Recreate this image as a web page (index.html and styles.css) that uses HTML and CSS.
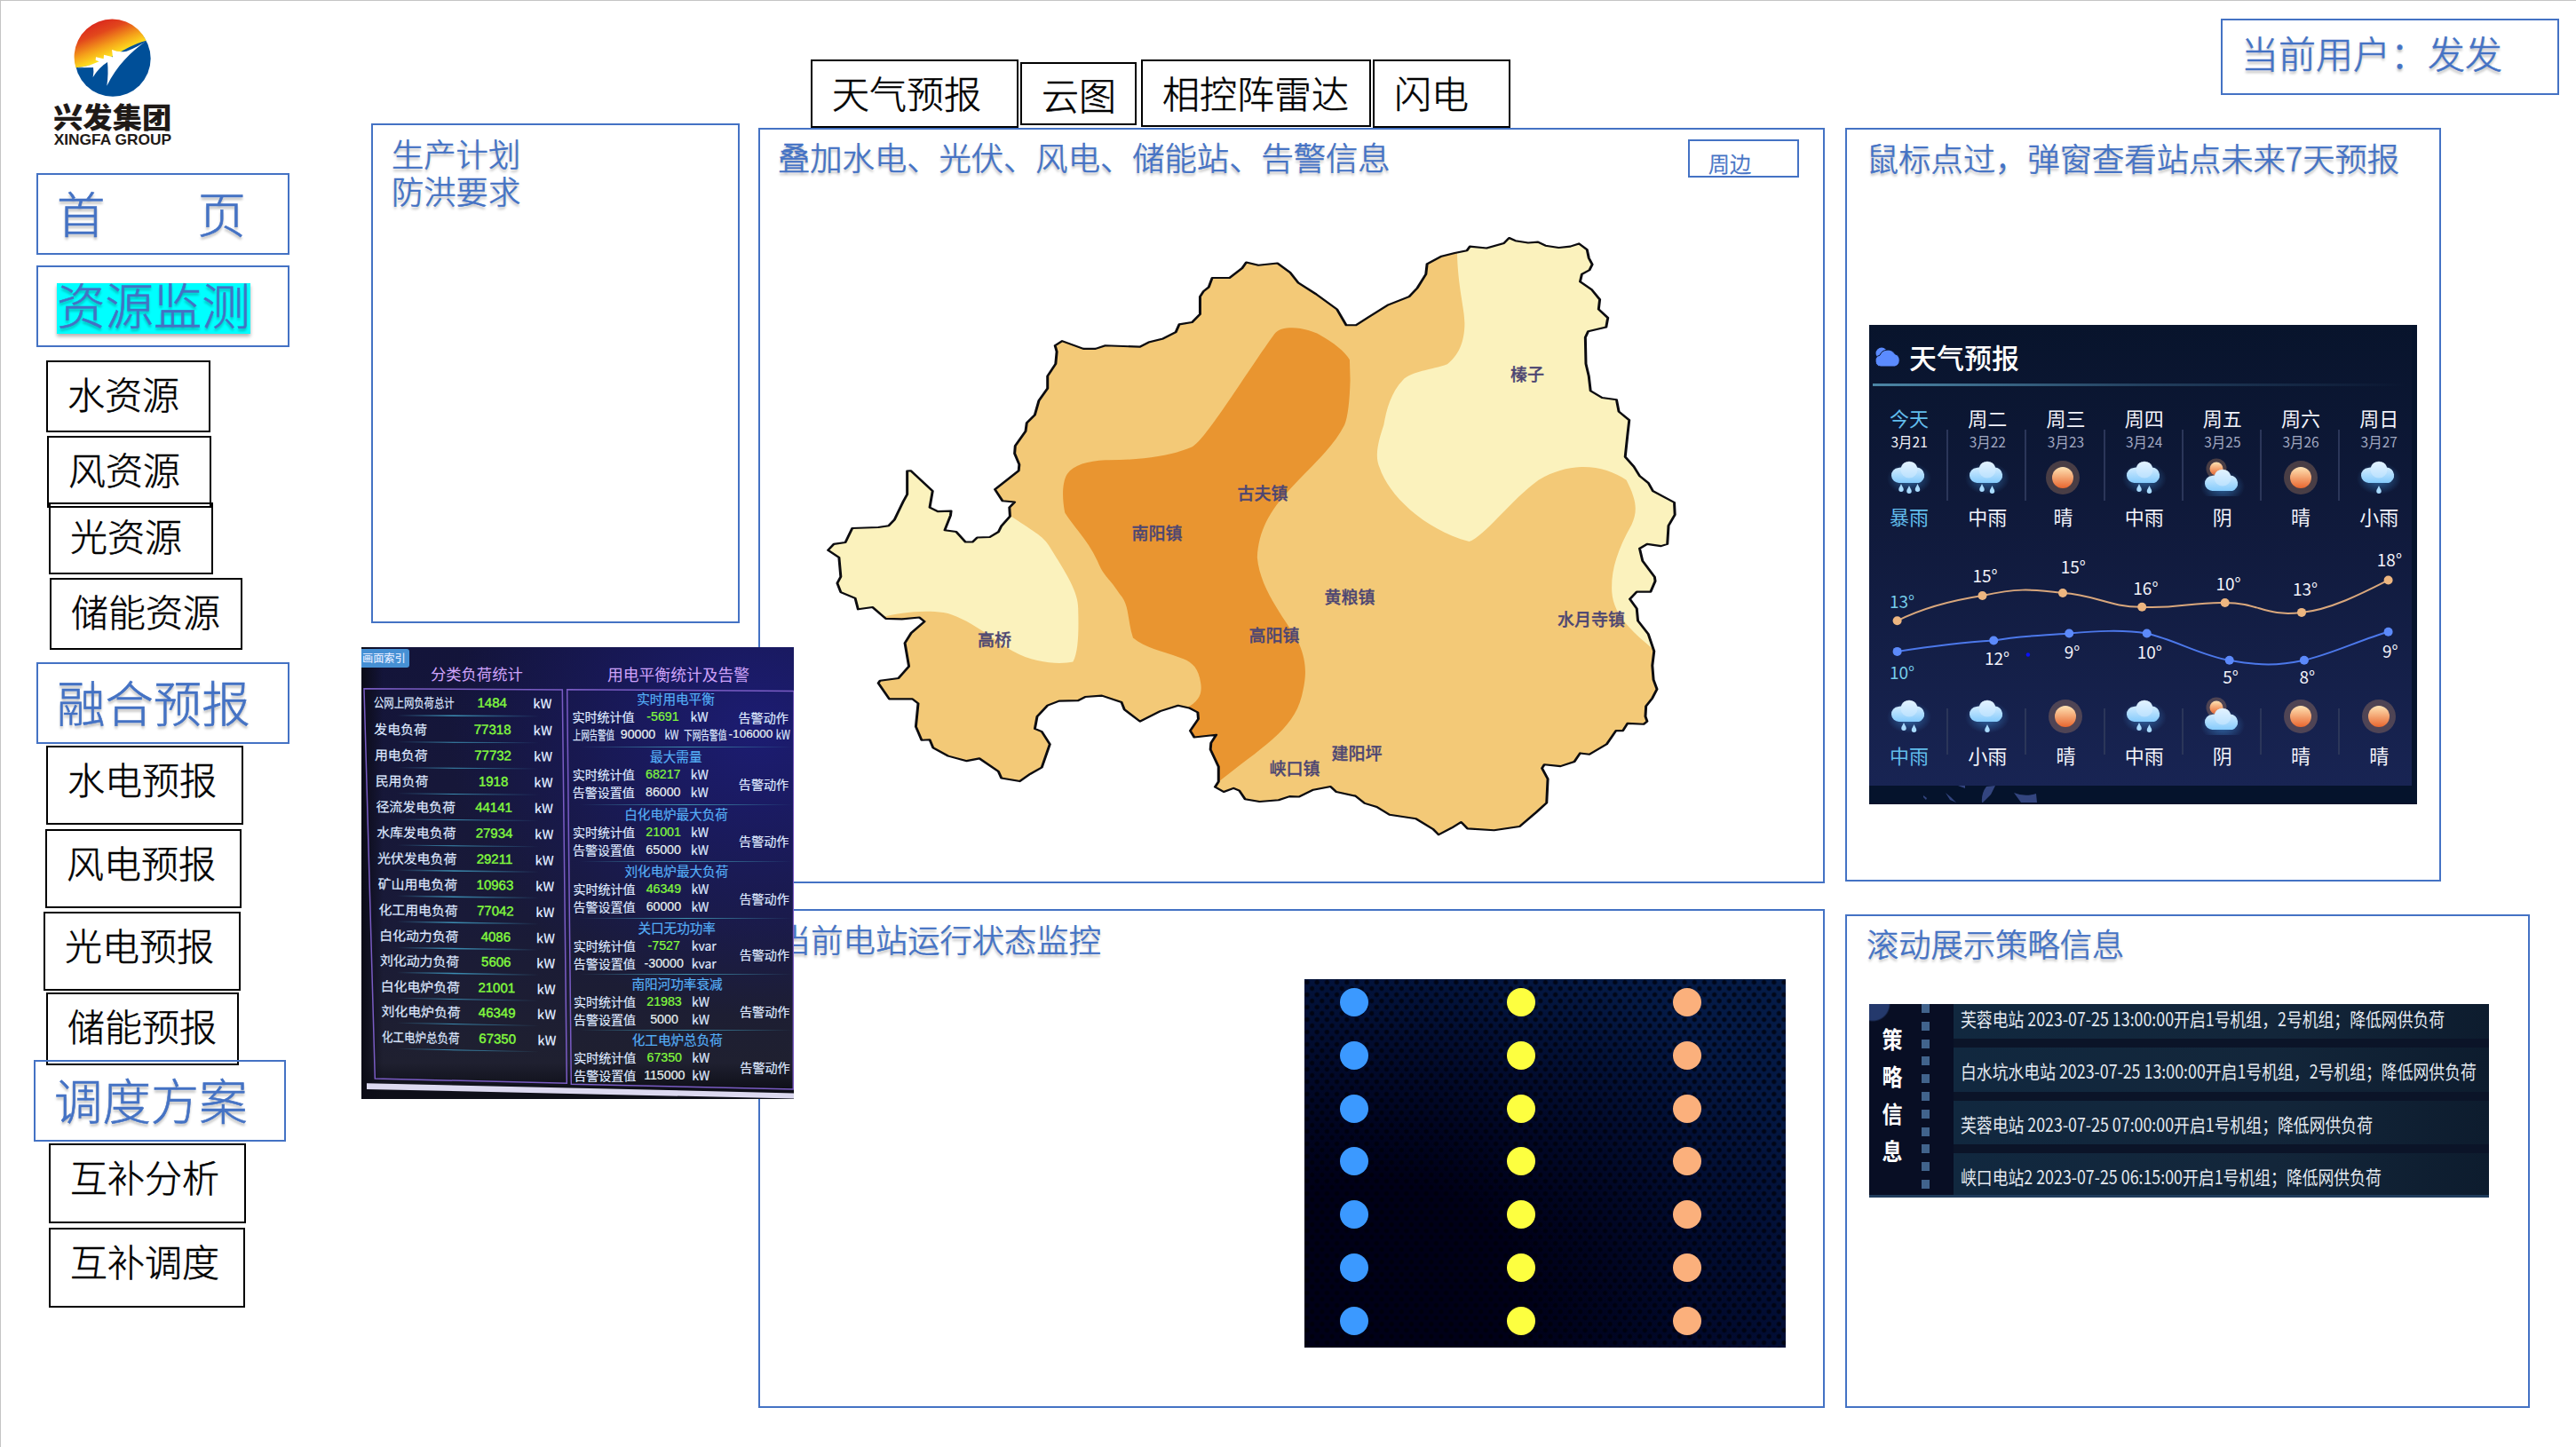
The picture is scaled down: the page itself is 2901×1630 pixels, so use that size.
FILE: index.html
```html
<!DOCTYPE html>
<html lang="zh-CN">
<head>
<meta charset="utf-8">
<title>兴发集团 资源监测</title>
<link rel="stylesheet" href="styles.css">
</head>
<body>
<svg class="defs" width="0" height="0" aria-hidden="true">
  <defs>
    <linearGradient id="gCloud" x1="0" y1="0" x2="0" y2="1"><stop offset="0" stop-color="#eef7ff"/><stop offset="1" stop-color="#85cbfc"/></linearGradient>
    <linearGradient id="gSun" x1="0" y1="0" x2="0" y2="1"><stop offset="0" stop-color="#ffe3b4"/><stop offset="1" stop-color="#e8662f"/></linearGradient>
    <radialGradient id="gGlow"><stop offset="0" stop-color="#4ba6f5" stop-opacity=".55"/><stop offset="1" stop-color="#4ba6f5" stop-opacity="0"/></radialGradient>
  </defs>
  <symbol id="cloud" viewBox="0 0 50 44">
    <ellipse cx="25" cy="24" rx="25" ry="18" fill="url(#gGlow)"/>
    <path d="M14 29a8.500 8.500 0 0 1-1-17a5 5 0 0 1 3-.5a9.500 9.500 0 0 1 18 0a9 9 0 0 1 2 17.500z" fill="url(#gCloud)"/>
    <circle cx="25" cy="14" r="9.500" fill="#d8edff" opacity=".5"/>
  </symbol>
  <symbol id="drop" viewBox="0 0 8 12"><path d="M4 1C5 4 7 5.500 7 8a3 3 0 0 1-6 0C1 5.500 3 4 4 1z" fill="#a9dbff"/></symbol>
  <symbol id="rain3" viewBox="0 0 50 44"><use href="#cloud" width="50" height="44"/><use href="#drop" x="12" y="29" width="8" height="11"/><use href="#drop" x="21" y="31" width="8" height="11"/><use href="#drop" x="30.500" y="29" width="8" height="11"/></symbol>
  <symbol id="rain2" viewBox="0 0 50 44"><use href="#cloud" width="50" height="44"/><use href="#drop" x="15" y="29" width="8" height="11"/><use href="#drop" x="26.500" y="31" width="8" height="11"/></symbol>
  <symbol id="rain1" viewBox="0 0 50 44"><use href="#cloud" width="50" height="44"/><use href="#drop" x="21" y="31" width="8" height="11"/></symbol>
  <symbol id="sun" viewBox="0 0 50 44"><circle cx="25" cy="23" r="19" fill="#e9a36b" opacity=".27"/><circle cx="25" cy="23" r="12" fill="url(#gSun)"/></symbol>
  <symbol id="overcast" viewBox="0 0 50 44"><circle cx="18" cy="13" r="11.500" fill="#e9a36b" opacity=".27"/><circle cx="18" cy="13" r="7.500" fill="url(#gSun)"/><use href="#cloud" y="9" width="50" height="44"/></symbol>
</svg>

<div class="page">
  <aside class="sidebar">
    <svg class="logo" viewBox="0 0 465 465" role="img" aria-label="兴发集团">
      <defs>
        <linearGradient id="gLogo" x1=".15" y1=".1" x2=".55" y2=".75"><stop offset="0" stop-color="#d9231d"/><stop offset=".35" stop-color="#e2471c"/><stop offset=".7" stop-color="#f5a11a"/><stop offset="1" stop-color="#ffe51f"/></linearGradient>
      </defs>
      <g transform="translate(0 2)">
        <circle cx="231" cy="151" r="128" fill="#004f98"/>
        <path d="M106 182A128 128 0 0 1 344 90C260 112 220 170 106 182z" fill="url(#gLogo)"/>
        <path d="M107 182C135 181 160 172 185 161L173 156L174 146L200 152L201 138L231 146L228 121Q252 131 278 126Q316 112 344 91C290 130 245 175 211 243Q217 200 213 163Q185 180 164 214Q168 196 165 181z" fill="#fff"/>
      </g>
      <text class="logo-cn" x="30" y="386" textLength="400" lengthAdjust="spacingAndGlyphs">兴发集团</text>
      <text class="logo-en" x="32" y="444" textLength="397" lengthAdjust="spacingAndGlyphs">XINGFA GROUP</text>
    </svg>
    <nav class="nav">
      <a class="box main n-home"><span>首</span><span>页</span></a>
      <a class="box main n-monitor"><mark>资源监测</mark></a>
      <a class="box sub n-water">水资源</a>
      <a class="box sub n-wind">风资源</a>
      <a class="box sub n-light">光资源</a>
      <a class="box sub n-store">储能资源</a>
      <a class="box main n-fusion">融合预报</a>
      <a class="box sub n-hydro">水电预报</a>
      <a class="box sub n-windf">风电预报</a>
      <a class="box sub n-pv">光电预报</a>
      <a class="box sub n-storef">储能预报</a>
      <a class="box main n-plan">调度方案</a>
      <a class="box sub n-analysis">互补分析</a>
      <a class="box sub n-dispatch">互补调度</a>
    </nav>
  </aside>

  <section class="plan panel"><h2>生产计划<br>防洪要求</h2></section>

  <main class="center">
    <div class="tabs">
      <a class="box sub t-weather">天气预报</a>
      <a class="box sub t-cloud">云图</a>
      <a class="box sub t-radar">相控阵雷达</a>
      <a class="box sub t-flash">闪电</a>
    </div>
    <section class="panel map-panel">
      <header><h2>叠加水电、光伏、风电、储能站、告警信息</h2><a class="near">周边</a></header>
      <svg class="map" viewBox="0 0 1020 720">
        <defs>
          <path id="county" d="M50 827L60 812L80 808L92 773L137 771L155 767L165 752L180 708L187 690L187 633L193 632L231 682L226 722L240 732L263 731L262 742L252 778L272 782L288 807L300 807L308 796L330 795L345 782L350 768L365 744L364 722L373 709L352 706L339 678L380 632L381 617L373 590L374 571L392 535L394 515L408 495L415 460L430 430L430 400L444 370L446 340L443 325L455 314L492 333L513 333L530 325L590 328L605 317L630 308L652 292L658 273L680 268L694 248L694 205L700 192L709 182L715 159L745 159L767 135L774 121L795 128L828 123L850 146L864 171L895 199L931 236L947 275L964 275L985 256L1020 225L1056 205L1070 184L1085 150L1087 125L1112 106L1135 98L1156 92L1161 82L1190 86L1220 74L1229 61L1240 68L1262 73L1279 71L1292 80L1315 85L1335 82L1350 75L1364 90L1367 110L1373 126L1368 140L1355 150L1352 168L1372 188L1386 212L1384 236L1400 257L1397 280L1366 290L1361 305L1362 370L1367 400L1370 436L1390 453L1415 458L1419 487L1437 508L1434 545L1430 598L1445 622L1455 645L1470 662L1478 682L1515 710L1516 740L1505 767L1503 812L1492 817L1468 812L1455 823L1460 853L1481 893L1482 903L1474 929L1450 929L1438 947L1450 970L1452 1000L1470 1033L1480 1075L1477 1110L1479 1145L1485 1168L1477 1190L1466 1210L1465 1235L1468 1247L1462 1254L1434 1252L1426 1270L1414 1270L1398 1303L1368 1328L1352 1325L1342 1346L1318 1357L1290 1353L1286 1362L1296 1388L1294 1447L1276 1470L1247 1505L1203 1514L1157 1510L1146 1494L1130 1508L1107 1525L1098 1512L1068 1486L1022 1476L1000 1457L979 1448L963 1430L930 1420L920 1407L890 1415L865 1432L849 1431L830 1440L797 1444L772 1438L762 1417L752 1411L735 1420L720 1408L726 1395L726 1358L712 1316L713 1300L722 1280L684 1286L677 1270L691 1241L690 1225L675 1214L656 1208L625 1222L590 1247L563 1218L558 1200L524 1184L495 1187L483 1196L450 1197L430 1208L412 1235L408 1265L420 1272L434 1303L420 1360L400 1376L382 1394L350 1386L345 1370L312 1338L290 1344L258 1332L232 1312L226 1292L212 1293L202 1260L206 1203L196 1192L156 1192L137 1153L140 1147L172 1141L190 1112L183 1055L194 1030L217 1002L208 992L178 996L150 995L127 967L102 972L97 945L72 930L66 908L72 892L69 845z"/>
          <clipPath id="inside"><use href="#county"/></clipPath>
        </defs>
        <g transform="scale(.65051 .45918)">
          <g clip-path="url(#inside)">
            <rect width="1568" height="1568" fill="#f3c977"/>
            <path fill="#fbf2bd" d="M1139 0L1139 95C1140 180 1152 235 1152 270C1152 320 1140 350 1122 371C1095 385 1060 388 1045 410C1025 440 1017 480 1012 520C1000 570 997 600 1005 625C1020 690 1080 775 1160 806C1185 795 1235 700 1280 655C1340 605 1395 620 1432 655C1450 705 1452 730 1441 765C1415 830 1405 880 1407 930C1410 990 1445 1030 1485 1078L1568 1078L1568 0z"/>
            <path fill="#fbf2bd" d="M0 600L200 560L330 700L367 744C400 775 425 795 432 815C465 890 483 930 483 970C484 1020 484 1075 474 1101C455 1107 410 1107 370 1075C340 1050 290 990 250 980C210 972 170 982 140 992L0 1000z"/>
            <path fill="#e99530" d="M835 285C860 275 890 290 900 298C925 318 945 340 953 360L954 410C953 460 950 500 944 520C925 575 880 630 848 680C815 730 795 780 793 845C798 930 850 1010 865 1055C880 1105 878 1140 870 1185C855 1270 800 1310 722 1400L600 1300L670 1215C695 1195 699 1175 694 1145C690 1110 675 1098 660 1091C625 1072 600 1068 578 1042C568 1000 572 960 555 935C540 900 530 895 520 865C500 800 480 780 460 735C455 700 455 660 464 640C475 618 500 608 530 606C600 607 650 592 678 575C700 565 770 400 820 302C826 290 832 286 835 285z"/>
          </g>
          <use href="#county" fill="none" stroke="#0c0c10" stroke-width="4.600" stroke-linejoin="round"/>
        </g>
        <g class="towns">
          <text x="820" y="189">榛子</text><text x="522" y="323">古夫镇</text><text x="403" y="368">南阳镇</text>
          <text x="620" y="440">黄粮镇</text><text x="892" y="465">水月寺镇</text><text x="220" y="488">高桥</text>
          <text x="535" y="483">高阳镇</text><text x="628" y="616">建阳坪</text><text x="558" y="633">峡口镇</text>
        </g>
      </svg>
    </section>
    <section class="panel status-panel">
      <h2>当前电站运行状态监控</h2>
      <div class="matrix">
        <i></i><i></i><i></i><i></i><i></i><i></i><i></i>
        <i></i><i></i><i></i><i></i><i></i><i></i><i></i>
        <i></i><i></i><i></i><i></i><i></i><i></i><i></i>
      </div>
    </section>
  </main>

  <div class="right">
    <div class="user">当前用户：发发</div>
    <section class="panel forecast-panel">
      <h2>鼠标点过，弹窗查看站点未来7天预报</h2>
      <div class="weather">
        <div class="weather-in">
          <header>
            <svg viewBox="0 0 30 22"><circle cx="8" cy="7" r="6.500" fill="#5b8bff"/><path d="M7 22a6.500 6.500 0 0 1-1-12.800a9.500 9.500 0 0 1 17-1.500a7.500 7.500 0 0 1 0 14.300z" fill="#5b8bff" stroke="#0c1530" stroke-width="1"/></svg>
            <h3>天气预报</h3>
          </header>
          <ol class="days">
            <li class="today"><b>今天</b><time>3月21</time><svg><use href="#rain3"/></svg><em>暴雨</em></li>
            <li><b>周二</b><time>3月22</time><svg><use href="#rain2"/></svg><em>中雨</em></li>
            <li><b>周三</b><time>3月23</time><svg class="nudge"><use href="#sun"/></svg><em class="nudge">晴</em></li>
            <li><b>周四</b><time>3月24</time><svg><use href="#rain2"/></svg><em>中雨</em></li>
            <li><b>周五</b><time>3月25</time><svg><use href="#overcast"/></svg><em>阴</em></li>
            <li><b>周六</b><time>3月26</time><svg><use href="#sun"/></svg><em>晴</em></li>
            <li><b>周日</b><time>3月27</time><svg><use href="#rain1"/></svg><em>小雨</em></li>
          </ol>
          <svg class="chart" viewBox="0 240 611 170">
            <path class="hi" d="M31.600 333.300C60 319 95 310 127.500 305C165 297 180 297 218 302C255 304 270 318 307.200 317.700C345 320 365 312 400.700 313C440 313 445 329 487 323.900C520 321 560 300 584.600 287.500"/>
            <path class="lo" d="M31.600 367.900C70 362 100 358 140.200 355.500C170 350 195 350 225.200 347.500C255 345 285 343 312.700 347.500C345 355 375 373 405.700 377.700C440 384 460 384 489.900 377.700C520 371 555 354 584.600 345.700"/>
            <g class="hi-dots"><circle cx="31.600" cy="333.300" r="5"/><circle cx="127.500" cy="305" r="5"/><circle cx="218" cy="302" r="5"/><circle cx="307.200" cy="317.700" r="5"/><circle cx="400.700" cy="313" r="5"/><circle cx="487" cy="323.900" r="5"/><circle cx="584.600" cy="287.500" r="5"/></g>
            <g class="lo-dots"><circle cx="31.600" cy="367.900" r="5"/><circle cx="140.200" cy="355.500" r="5"/><circle cx="225.200" cy="347.500" r="5"/><circle cx="312.700" cy="347.500" r="5"/><circle cx="405.700" cy="377.700" r="5"/><circle cx="489.900" cy="377.700" r="5"/><circle cx="584.600" cy="345.700" r="5"/></g>
            <circle cx="178.900" cy="371.500" r="2.200" fill="#0a10ff"/>
            <text class="now" x="37" y="318.600">13°</text><text x="130.500" y="290">15°</text><text x="229.800" y="279.700">15°</text><text x="311.400" y="304">16°</text><text x="404.500" y="299.300">10°</text><text x="491" y="305">13°</text><text x="585.900" y="272">18°</text>
            <text class="now" x="37" y="398.600">10°</text><text x="144" y="383">12°</text><text x="228.500" y="376">9°</text><text x="315.700" y="376">10°</text><text x="407" y="404.400">5°</text><text x="493.300" y="404">8°</text><text x="586.700" y="374.600">9°</text>
          </svg>
          <ol class="days night">
            <li class="today"><svg><use href="#rain2"/></svg><em>中雨</em></li>
            <li><svg><use href="#rain1"/></svg><em>小雨</em></li>
            <li><svg><use href="#sun"/></svg><em>晴</em></li>
            <li><svg><use href="#rain2"/></svg><em>中雨</em></li>
            <li><svg><use href="#overcast"/></svg><em>阴</em></li>
            <li><svg><use href="#sun"/></svg><em>晴</em></li>
            <li><svg><use href="#sun"/></svg><em>晴</em></li>
          </ol>
        </div>
        <svg class="islands" viewBox="0 0 200 20"><path d="M61 11l4 3-1 2-3-3zM86 8l6 5 6 6-7-3zM100 0h8v3zM132 1l10-1-5 10-9 9h-1q-1-10 5-18zM163 8q12 5 25 1l1 10h-18z" fill="#33457f"/></svg>
      </div>
    </section>
    <section class="panel strategy-panel">
      <h2>滚动展示策略信息</h2>
      <div class="strategy">
        <h3><span>策</span><span>略</span><span>信</span><span>息</span></h3>
        <div class="ticks"></div>
        <ul>
          <li><span>芙蓉电站 2023-07-25 13:00:00开启1号机组，2号机组；降低网供负荷</span></li>
          <li><span>白水坑水电站 2023-07-25 13:00:00开启1号机组，2号机组；降低网供负荷</span></li>
          <li><span>芙蓉电站 2023-07-25 07:00:00开启1号机组；降低网供负荷</span></li>
          <li><span>峡口电站2 2023-07-25 06:15:00开启1号机组；降低网供负荷</span></li>
        </ul>
      </div>
    </section>
  </div>

  <section class="loads">
    <svg class="frames" viewBox="0 0 487 509">
      <path d="M3 46.700L226.300 48L231.300 491.200L15.300 486.100z"/>
      <path d="M231.700 47.700L487 49.400L486.300 498L236.300 492.200z"/>
      <path class="bar" d="M6 491.200L487 502.400V508.500L6 498z"/>
    </svg>
    <div class="load-left">
      <a class="index">画面索引</a>
      <h3>分类负荷统计</h3>
      <ul>
        <li style="--i:0"><span class="tight">公网上网负荷总计</span><b>1484</b><i>kW</i></li>
        <li style="--i:1"><span>发电负荷</span><b>77318</b><i>kW</i></li>
        <li style="--i:2"><span>用电负荷</span><b>77732</b><i>kW</i></li>
        <li style="--i:3"><span>民用负荷</span><b>1918</b><i>kW</i></li>
        <li style="--i:4"><span>径流发电负荷</span><b>44141</b><i>kW</i></li>
        <li style="--i:5"><span>水库发电负荷</span><b>27934</b><i>kW</i></li>
        <li style="--i:6"><span>光伏发电负荷</span><b>29211</b><i>kW</i></li>
        <li style="--i:7"><span>矿山用电负荷</span><b>10963</b><i>kW</i></li>
        <li style="--i:8"><span>化工用电负荷</span><b>77042</b><i>kW</i></li>
        <li style="--i:9"><span>白化动力负荷</span><b>4086</b><i>kW</i></li>
        <li style="--i:10"><span>刘化动力负荷</span><b>5606</b><i>kW</i></li>
        <li style="--i:11"><span>白化电炉负荷</span><b>21001</b><i>kW</i></li>
        <li style="--i:12"><span>刘化电炉负荷</span><b>46349</b><i>kW</i></li>
        <li style="--i:13"><span class="snug">化工电炉总负荷</span><b>67350</b><i>kW</i></li>
      </ul>
    </div>
    <div class="load-right">
      <h3>用电平衡统计及告警</h3>
      <div class="group first" style="--i:0"><h4>实时用电平衡</h4><span>实时统计值</span><b>-5691</b><i>kW</i><em>告警动作</em><p><span>上网告警值</span><b>90000</b><i>kW</i><span>下网告警值</span><b>-106000</b><i>kW</i></p></div>
      <div class="group" style="--i:1"><h4>最大需量</h4><span>实时统计值</span><b>68217</b><i>kW</i><em>告警动作</em><span>告警设置值</span><b class="set">86000</b><i>kW</i></div>
      <div class="group" style="--i:2"><h4>白化电炉最大负荷</h4><span>实时统计值</span><b>21001</b><i>kW</i><em>告警动作</em><span>告警设置值</span><b class="set">65000</b><i>kW</i></div>
      <div class="group" style="--i:3"><h4>刘化电炉最大负荷</h4><span>实时统计值</span><b>46349</b><i>kW</i><em>告警动作</em><span>告警设置值</span><b class="set">60000</b><i>kW</i></div>
      <div class="group" style="--i:4"><h4>关口无功功率</h4><span>实时统计值</span><b>-7527</b><i>kvar</i><em>告警动作</em><span>告警设置值</span><b class="set">-30000</b><i>kvar</i></div>
      <div class="group" style="--i:5"><h4>南阳河功率衰减</h4><span>实时统计值</span><b>21983</b><i>kW</i><em>告警动作</em><span>告警设置值</span><b class="set">5000</b><i>kW</i></div>
      <div class="group last" style="--i:6"><h4>化工电炉总负荷</h4><span>实时统计值</span><b>67350</b><i>kW</i><em>告警动作</em><span>告警设置值</span><b class="set">115000</b><i>kW</i></div>
    </div>
  </section>
</div>
</body>
</html>
```
FILE: styles.css
```css
* { box-sizing: border-box; margin: 0; padding: 0; }
body { background: #fff; font-family: "Noto Sans CJK SC", "Noto Sans", sans-serif; }
ul, ol { list-style: none; }
i, em { font-style: normal; }
svg { display: block; }
.defs { position: absolute; }

.page {
  position: relative;
  display: flex;
  align-items: flex-start;
  width: 2901px;
  height: 1630px;
  overflow: hidden;
  border-top: 1px solid #c4c4c4;
  border-left: 1px solid #c4c4c4;
}

h2, .user, .near, .main {
  color: #4472c4;
  font-weight: 300;
  -webkit-text-stroke: .6px;
  text-shadow: 0 3px 3px rgba(0, 0, 0, .28);
}
h2 { font-size: 36.300px; line-height: 42px; white-space: nowrap; }
.panel, .user, .near { border: 2px solid #4472c4; }

/* sidebar */
.sidebar { width: 417px; flex: none; padding-top: 14px; }
.logo { width: 155px; height: 155px; margin-left: 49px; }
.logo-cn { font: 900 94px "Noto Sans CJK SC", sans-serif; fill: #1f1a17; }
.logo-en { font: 700 49px "Liberation Sans", sans-serif; fill: #1f1a17; }
.nav { padding-top: 25px; }
.box { display: block; white-space: nowrap; }
.main {
  width: 285px;
  height: 92px;
  margin-left: 40px;
  padding-left: 21px;
  border: 2px solid #4472c4;
  font-size: 54.400px;
  line-height: 83px;
}
.main mark {
  display: inline-block;
  height: 57px;
  line-height: 45px;
  background: #0ff;
  color: inherit;
  box-shadow: 0 3px 4px rgba(0, 0, 0, .3);
  vertical-align: top;
  margin-top: 18px;
}
.sub {
  border: 2px solid #000;
  color: #000;
  font-size: 42px;
  font-weight: 300;
  -webkit-text-stroke: .5px;
  line-height: 69px;
  padding-left: 22px;
}
.n-home { display: flex; gap: 104px; }
.n-monitor { margin-top: 12px; }
.n-water { width: 185px; height: 81px; margin: 15px 0 0 51px; }
.n-wind { width: 185px; height: 81px; margin: 4px 0 0 52px; }
.n-light { width: 185px; height: 81px; margin: -6px 0 0 54px; }
.n-store { width: 217px; height: 81px; margin: 4px 0 0 55px; }
.n-fusion { margin-top: 14px; }
.n-hydro { width: 222px; height: 89px; margin: 2px 0 0 51px; }
.n-windf { width: 221px; height: 89px; margin: 5px 0 0 50px; }
.n-pv { width: 222px; height: 89px; margin: 4px 0 0 48px; }
.n-storef { width: 217px; height: 82px; margin: 2px 0 0 51px; }
.n-plan { width: 284px; margin: -6px 0 0 37px; }
.n-analysis { width: 222px; height: 90px; margin: 2px 0 0 54px; }
.n-dispatch { width: 221px; height: 90px; margin: 5px 0 0 54px; }

/* production plan */
.plan { width: 415px; height: 563px; margin-top: 138px; padding: 10px 0 0 21px; flex: none; }

/* centre column */
.center { width: 1201px; margin: 66px 0 0 21px; flex: none; }
.tabs { display: flex; height: 77px; padding-left: 59px; }
.t-weather { width: 234px; height: 77px; }
.t-cloud { width: 131px; height: 71px; margin: 3px 0 0 2px; line-height: 68px; }
.t-radar { width: 259px; height: 76px; margin-left: 5px; }
.t-flash { width: 155px; height: 77px; margin-left: 2px; }
.map-panel { height: 851px; }
.map-panel header { display: flex; justify-content: space-between; height: 94px; padding: 11px 27px 0 20px; }
.map-panel h2 { margin-top: -2px; }
.near { width: 125px; height: 43px; padding-left: 21px; font-size: 24px; line-height: 49px; text-shadow: none; }
.map { width: 1020px; height: 720px; margin-left: 44px; }
.towns text {
  font: 500 19px "Noto Sans CJK SC", sans-serif;
  fill: #4d4672;
  stroke: #4d4672;
  stroke-width: .3;
  text-anchor: middle;
}
.status-panel { height: 562px; margin-top: 29px; padding: 10px 0 0 21px; }
.matrix {
  display: grid;
  grid-template-rows: repeat(7, 32px);
  grid-auto-flow: column;
  grid-auto-columns: 32px;
  gap: 27.800px 155.600px;
  width: 542px;
  height: 415px;
  margin: 25px 0 0 592px;
  padding: 10px 0 0 40px;
  background:
    radial-gradient(circle at 3px 3.500px, rgba(0, 0, 8, .75) 1.800px, transparent 3.400px) 0 0 / 11.200px 14px,
    radial-gradient(circle at 8.600px 10.500px, rgba(0, 0, 8, .75) 1.800px, transparent 3.400px) 0 0 / 11.200px 14px,
    radial-gradient(ellipse at 15% 85%, #000018 25%, rgba(0, 0, 30, 0) 80%),
    linear-gradient(200deg, #051c48, #000a34);
}
.matrix i { border-radius: 50%; background: #3b99ff; }
.matrix i:nth-child(n+8) { background: #fdff40; }
.matrix i:nth-child(n+15) { background: #fbb07c; }

/* right column */
.right { margin: 20px 0 0 23px; flex: none; width: 805px; }
.user { width: 381px; height: 86px; margin-left: 423px; padding-left: 21px; font-size: 42px; line-height: 71px; white-space: nowrap; }
.forecast-panel { width: 671px; height: 849px; margin-top: 37px; padding: 10px 0 0 22px; }
.weather { width: 617px; height: 540px; margin: 168px 0 0 3px; background: #05132c; }
.weather-in { width: 611px; height: 519px; background: linear-gradient(#08142c, #101a3c 45%, #182453); display: flex; flex-direction: column; }
.weather header {
  display: flex;
  align-items: center;
  gap: 9px;
  height: 69px;
  padding: 2px 0 0 6px;
  background: linear-gradient(90deg, #4c86a6, #23405f 50%, transparent) 4px 100% / 600px 3px no-repeat;
}
.weather header svg { width: 30px; height: 22px; }
.weather h3 { color: #fff; font-size: 31px; font-weight: 500; line-height: 44px; }
.days { display: grid; grid-template-columns: repeat(7, 88.200px); width: 617px; height: 171px; padding-top: 20px; margin-left: 1px; }
.days li {
  display: flex;
  flex-direction: column;
  align-items: center;
  color: #f3f3fa;
  background: linear-gradient(#2b3659, #2b3659) 100% 29px / 2px 80px no-repeat;
}
.days li:last-child { background: none; }
.days b { font-size: 22px; font-weight: 400; line-height: 30px; }
.days time { font-size: 15.500px; line-height: 24px; color: #a2a9c2; }
.days svg { width: 50px; height: 44px; margin-top: 6px; overflow: visible; }
.days em { font-size: 22px; line-height: 30px; margin-top: 7px; }
.days .nudge { transform: translateX(-3px); }
.days .today { color: #62bdec; }
.days .today time { color: #f3f3fa; }
.chart { width: 611px; height: 170px; }
.chart path { fill: none; stroke-width: 2; }
.chart .hi { stroke: #d9a77c; }
.chart .lo { stroke: #4c78ea; }
.hi-dots { fill: #edb680; }
.lo-dots { fill: #5c8afb; }
.chart text { font: 400 19px "Noto Sans CJK SC", sans-serif; fill: #f3f3fa; text-anchor: middle; }
.chart .now { fill: #76cdea; }
.night { height: 105px; padding-top: 2px; }
.night li { background-position: 100% 20px; background-size: 2px 52px; }
.islands { width: 200px; height: 20px; }

.strategy-panel { width: 771px; height: 556px; margin-top: 37px; padding: 9px 0 0 22px; }
.strategy {
  display: flex;
  width: 698px;
  height: 218px;
  margin: 48px 0 0 3px;
  overflow: hidden;
  background: radial-gradient(circle at 4px 0, #24396c 18px, transparent 20px), #080e24;
  border-bottom: 3px solid #203c5c;
}
.strategy h3 { flex: none; width: 52px; padding-top: 18px; color: #fff; font-size: 23px; line-height: 42px; text-align: center; }
.strategy h3 span { display: block; transform: scaleY(1.150); }
.ticks { flex: none; width: 9px; margin: 0 27px 0 7px; background: repeating-linear-gradient(#41638c 0 10px, transparent 10px 19.800px); }
.strategy ul { flex: 1; min-width: 0; display: flex; flex-direction: column; gap: 10px; background: #0b1428; margin-top: -10px; }
.strategy li { flex: none; height: 49.400px; padding-left: 8px; background: linear-gradient(90deg, #11283f, #13263a 60%, #0d1c2e); line-height: 52px; }
.strategy li span { display: inline-block; transform: scaleX(.849); transform-origin: 0 0; color: #e3e9f0; font-size: 21px; font-weight: 400; white-space: nowrap; }

/* load statistics, floating over the neighbouring panels */
.loads {
  position: absolute;
  left: 406px;
  top: 728px;
  display: flex;
  width: 487px;
  height: 509px;
  overflow: hidden;
  background:
    linear-gradient(90deg, #0b0b16, transparent 5%),
    radial-gradient(ellipse at 92% 18%, #1c1c72, rgba(26, 26, 80, 0) 55%),
    linear-gradient(#13143a, #191a38 60%, #1f2030 92%, #0e0f18 98%);
  color: #dfe8ff;
}
.frames { position: absolute; inset: 0; width: 487px; height: 509px; }
.frames path { fill: none; stroke: #7a5cc4; stroke-width: 1.500; }
.frames .bar { fill: #dcd9f0; stroke: none; }
.load-left { width: 232px; flex: none; }
.index {
  display: block;
  width: 54px;
  height: 21px;
  margin-top: 2px;
  padding-left: 1px;
  border-radius: 0 3px 3px 0;
  background: #4690d4;
  font-size: 12.200px;
  font-weight: 500;
  line-height: 20px;
}
.loads h3 { color: #cfa3fb; font-size: 17.300px; font-weight: 400; line-height: 20px; white-space: nowrap; }
.load-left h3 { margin: -3px 0 8px 78px; }
.load-left li {
  display: grid;
  grid-template-columns: calc(103.700px - var(--i) * .28px) 60px 30px;
  height: calc(29.500px - var(--i) * .1px);
  padding-left: calc(13.500px + var(--i) * .74px);
  line-height: 28px;
  white-space: nowrap;
  transform: skewY(calc(.3deg + var(--i) * .07deg));
  transform-origin: 0 0;
  background: linear-gradient(90deg, transparent, #3c8fb4 40%, transparent) 40px 100% / 160px 1.500px no-repeat;
}
.load-left li span { font-size: 14.900px; transform-origin: 0 50%; -webkit-text-stroke: .2px; }
.load-left .tight { transform: scaleX(.760); }
.load-left .snug { transform: scaleX(.840); }
.loads b {
  font-family: "Liberation Sans", sans-serif;
  font-size: 15px;
  font-weight: 400;
  color: #83fb3e;
  text-align: center;
  -webkit-text-stroke: .4px;
}
.load-left i { font-size: 14.500px; font-weight: 500; margin-left: calc(16px - var(--i) * .075px); }
.load-right { width: 251px; margin-left: 4px; padding-top: 20px; }
.load-right h3 { margin: 0 0 8px 41px; font-size: 17.800px; }
.group {
  display: grid;
  grid-template-columns: 77px 50px 60px 60px;
  grid-template-rows: 20px 19.600px 21px;
  height: calc(65.300px - var(--i) * .5px);
  padding-left: calc(1.500px + var(--i) * .3px);
  font-size: 14px;
  line-height: 20px;
  white-space: nowrap;
  background: linear-gradient(90deg, transparent, #3f93b0 50%, transparent) 10px 100% / 240px 1.500px no-repeat;
  -webkit-text-stroke: .2px;
}
.group.last { background: none; }
.group h4 { grid-column: 1 / -1; padding-right: 14px; text-align: center; color: #55aef6; font-size: 14.600px; font-weight: 400; }
.group > span { grid-column: 1; }
.group b { font-size: 14.200px; -webkit-text-stroke: .2px; }
.group i { padding-left: 6px; }
.group em { grid-column: 4; grid-row: 2 / 4; align-self: center; font-size: 14.100px; }
.group .set, .group p b { color: #e8f1f0; }
.group.first em { grid-row: 2; padding-top: 2px; }
.group p { grid-column: 1 / -1; display: flex; }
.group p span { flex: none; width: 47px; font-size: 14px; transform: scaleX(.670); transform-origin: 0 50%; }
.group p b { flex: none; width: 40px; margin-left: 7px; }
.group p i { flex: none; width: 22px; padding-left: 9px; transform: scaleX(.800); transform-origin: 50% 50%; }
.group p span:nth-of-type(2) { width: 49px; margin-left: 9px; transform: scaleX(.690); }
.group p b:nth-of-type(2) { width: 52px; margin-left: 1px; font-size: 13.600px; }
.group p i:last-child { padding-left: 0; width: 18px; }
```
